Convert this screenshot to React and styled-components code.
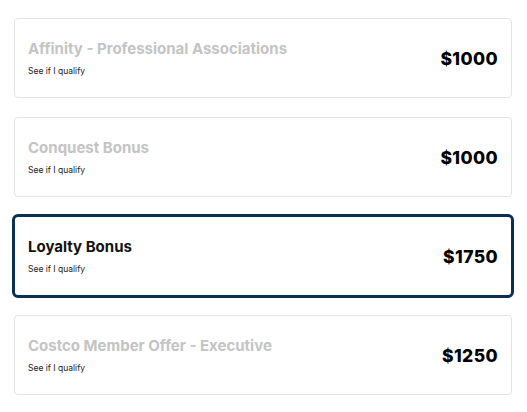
import React from 'react';
import styled, { createGlobalStyle } from 'styled-components';

const OFFERS = [
  { id: 1, name: 'Affinity - Professional Associations', amount: 1000 },
  { id: 2, name: 'Conquest Bonus', amount: 1000 },
  { id: 3, name: 'Loyalty Bonus', amount: 1750, selected: true },
  { id: 4, name: 'Costco Member Offer - Executive', amount: 1250 },
];

const App = () => {
  return (
    <>
      <GlobalStyle />
      <List>
        {OFFERS.map((offer) => (
          <OfferCard key={offer.id} selected={offer.selected}>
            <Info>
              <Title selected={offer.selected}>{offer.name}</Title>
              <Qualify>See if I qualify</Qualify>
            </Info>
            <Amount>${offer.amount}</Amount>
          </OfferCard>
        ))}
      </List>
    </>
  );
};

export default App;

const GlobalStyle = createGlobalStyle`
  body {
    margin: 0;
    background: #ffffff;
    font-family: Inter, "Liberation Sans", sans-serif;
  }
`;

const List = styled.div`
  width: 498px;
  padding: 18px 0 0 14px;
  display: flex;
  flex-direction: column;
  gap: 19px;
`;

const OfferCard = styled.div`
  box-sizing: border-box;
  height: ${({ selected }) => (selected ? '84px' : '80px')};
  margin: ${({ selected }) => (selected ? '-2px -2px' : '0')};
  border: ${({ selected }) => (selected ? '3px solid #0b2f55' : '1px solid #e4e4e4')};
  border-radius: ${({ selected }) => (selected ? '6px' : '4px')};
  background: white;
  display: flex;
  align-items: center;
  justify-content: space-between;
  padding: 0 13px;
`;

const Info = styled.div`
  display: flex;
  flex-direction: column;
  gap: 9px;
  padding-bottom: 1px;
`;

const Title = styled.div`
  font-size: 15px;
  line-height: 17px;
  font-weight: 700;
  color: ${({ selected }) => (selected ? '#111111' : '#c4c4c4')};
`;

const Qualify = styled.div`
  font-size: 8.5px;
  line-height: 10px;
  color: #222222;
`;

const Amount = styled.div`
  font-size: 17.5px;
  font-weight: 800;
  letter-spacing: 0.4px;
  color: #000000;
`;
